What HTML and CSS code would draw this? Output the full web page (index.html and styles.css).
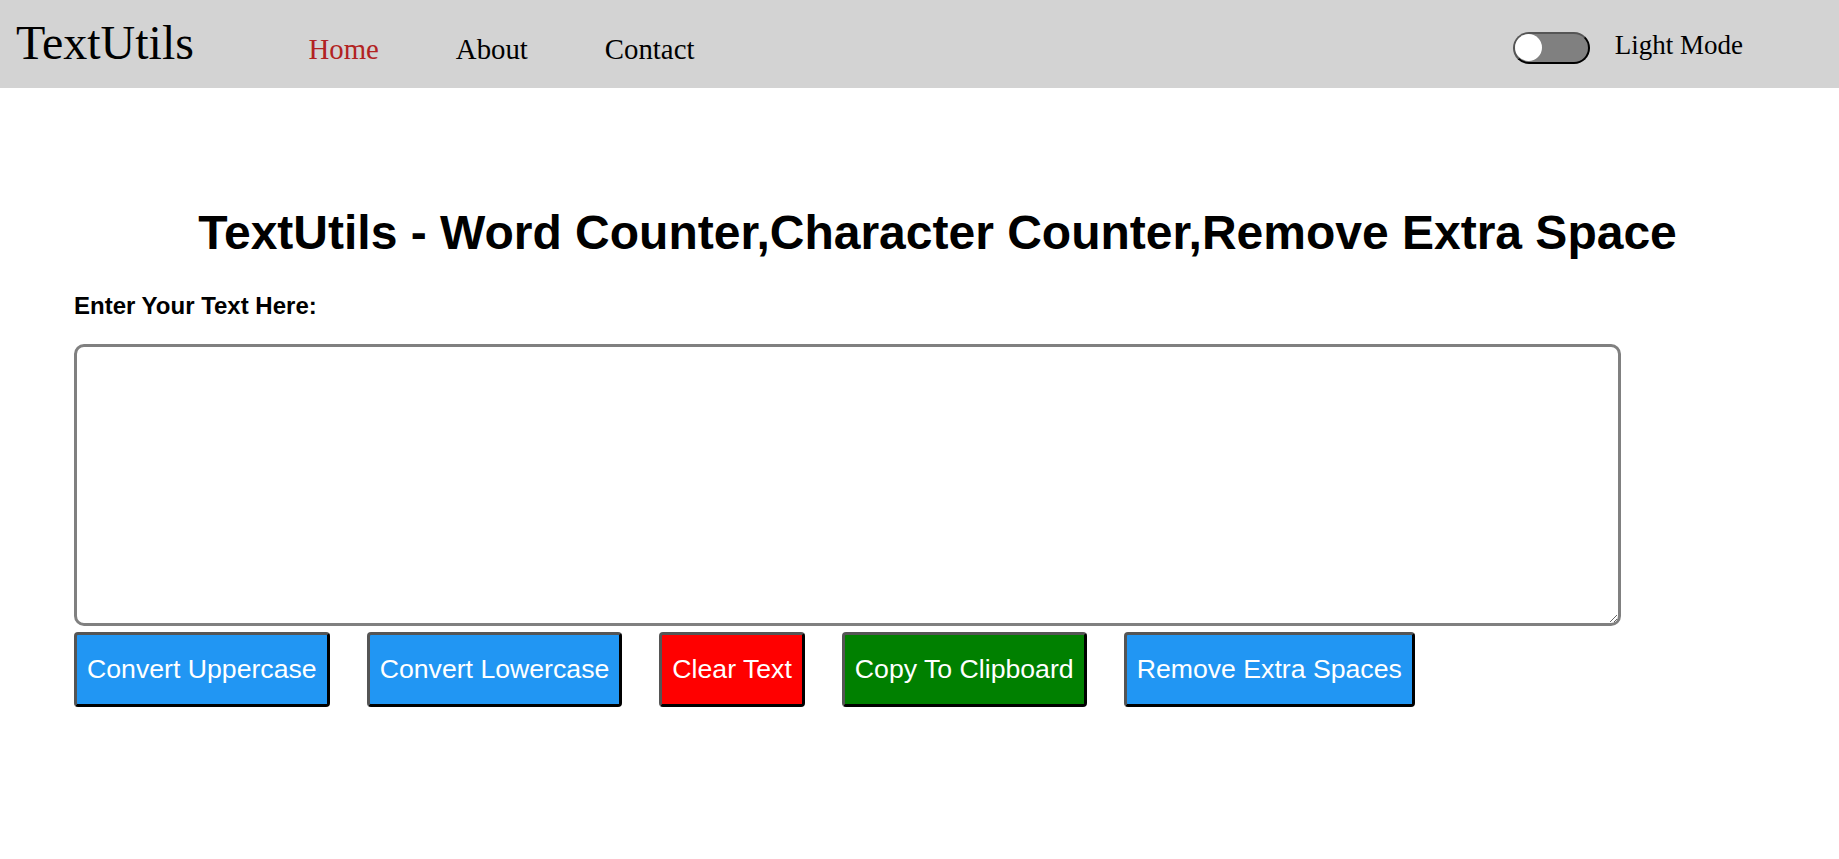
FILE: index.html
```html
<!DOCTYPE html>
<html lang="en">
<head>
<meta charset="utf-8">
<title>TextUtils</title>
<link rel="stylesheet" href="styles.css">
</head>
<body>
<nav class="navbar">
  <div class="brand">TextUtils</div>
  <ul class="nav-links">
    <li><a class="nav-link active" href="#">Home</a></li>
    <li><a class="nav-link" href="#">About</a></li>
    <li><a class="nav-link" href="#">Contact</a></li>
  </ul>
  <div class="mode">
    <span class="switch"><span class="knob"></span></span>
    <span class="mode-label">Light Mode</span>
  </div>
</nav>
<main class="main">
  <h1 class="title">TextUtils - Word Counter,Character Counter,Remove Extra Space</h1>
  <label class="label" for="text">Enter Your Text Here:</label>
  <textarea id="text" class="textbox"></textarea>
  <div class="actions">
    <button class="btn btn-blue">Convert Uppercase</button>
    <button class="btn btn-blue">Convert Lowercase</button>
    <button class="btn btn-red">Clear Text</button>
    <button class="btn btn-green">Copy To Clipboard</button>
    <button class="btn btn-blue">Remove Extra Spaces</button>
  </div>
</main>
</body>
</html>
```
FILE: styles.css
```css
html, body {
  margin: 0;
  padding: 0;
  background: #ffffff;
}

body {
  font-family: "Liberation Serif", "Times New Roman", serif;
  color: #000;
}

.navbar {
  display: flex;
  align-items: baseline;
  height: 88px;
  box-sizing: border-box;
  padding: 19px 96px 0 16px;
  background: #d3d3d3;
}

.brand {
  font-size: 48px;
  line-height: 48px;
}

.nav-links {
  display: flex;
  align-items: baseline;
  gap: 77px;
  list-style: none;
  margin: 0 0 0 114.5px;
  padding: 0;
}

.nav-link {
  font-size: 28.8px;
  color: #000;
  text-decoration: none;
}

.nav-link.active {
  color: #b22222;
}

.mode {
  display: flex;
  align-items: flex-start;
  align-self: flex-start;
  margin: 13px 0 0 auto;
  gap: 25px;
}

.switch {
  display: block;
  box-sizing: border-box;
  width: 77px;
  height: 32px;
  border: 2.5px solid;
  border-color: #555 #000 #000 #555;
  border-radius: 16px;
  background: #808080;
  padding: 0;
}

.knob {
  display: block;
  width: 27px;
  height: 27px;
  border-radius: 50%;
  background: #ffffff;
}

.mode-label {
  font-size: 27px;
  line-height: 27px;
}

.main {
  padding: 0 38px 0 74px;
  font-family: "Liberation Sans", Arial, sans-serif;
}

.title {
  margin: 117px 0 0 0;
  font-size: 48px;
  font-weight: bold;
  text-align: center;
}

.label {
  display: block;
  margin-top: 32px;
  font-size: 24px;
  font-weight: bold;
}

.textbox {
  display: block;
  box-sizing: border-box;
  width: 1547px;
  height: 282px;
  margin: 24px 0 0 0;
  border: 3px solid #808080;
  border-radius: 10px;
  background: #fff;
  font-family: "Liberation Sans", Arial, sans-serif;
  font-size: 16px;
}

.actions {
  display: flex;
  gap: 37px;
  margin-top: 6px;
}

.btn {
  font-family: "Liberation Sans", Arial, sans-serif;
  font-size: 26.67px;
  line-height: 31px;
  color: #fff;
  padding: 19px 10px;
  border: 3px solid;
  border-color: #555 #000 #000 #555;
  border-radius: 4px;
  margin: 0;
}

.btn-blue {
  background: #2196f3;
}

.btn-red {
  background: #ff0000;
}

.btn-green {
  background: #008000;
}
```
